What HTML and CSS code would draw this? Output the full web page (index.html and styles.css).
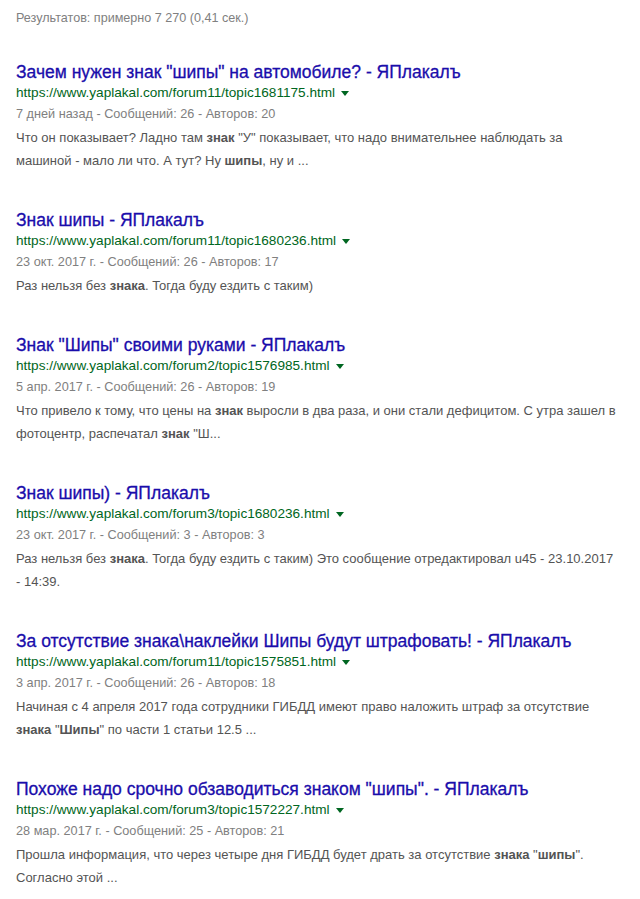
FILE: index.html
```html
<!DOCTYPE html>
<html lang="ru">
<head>
    <meta charset="UTF-8">
    <meta name="viewport" content="width=device-width, initial-scale=1.0">
    <title>знак шипы - Поиск</title>
    <link rel="stylesheet" href="styles.css">
</head>
<body>
    <div class="page">
        <div class="stats">Результатов: примерно 7 270 (0,41 сек.)</div>

        <div class="results">
            <div class="result">
                <a class="title" href="#">Зачем нужен знак "шипы" на автомобиле? - ЯПлакалъ</a>
                <div class="url">https://www.yaplakal.com/forum11/topic1681175.html<span class="arrow"></span></div>
                <div class="meta">7 дней назад - Сообщений: 26 - Авторов: 20</div>
                <div class="snippet">Что он показывает? Ладно там <b>знак</b> "У" показывает, что надо внимательнее наблюдать за<br>машиной - мало ли что. А тут? Ну <b>шипы</b>, ну и ...</div>
            </div>

            <div class="result">
                <a class="title" href="#">Знак шипы - ЯПлакалъ</a>
                <div class="url">https://www.yaplakal.com/forum11/topic1680236.html<span class="arrow"></span></div>
                <div class="meta">23 окт. 2017 г. - Сообщений: 26 - Авторов: 17</div>
                <div class="snippet">Раз нельзя без <b>знака</b>. Тогда буду ездить с таким)</div>
            </div>

            <div class="result">
                <a class="title" href="#">Знак "Шипы" своими руками - ЯПлакалъ</a>
                <div class="url">https://www.yaplakal.com/forum2/topic1576985.html<span class="arrow"></span></div>
                <div class="meta">5 апр. 2017 г. - Сообщений: 26 - Авторов: 19</div>
                <div class="snippet">Что привело к тому, что цены на <b>знак</b> выросли в два раза, и они стали дефицитом. С утра зашел в<br>фотоцентр, распечатал <b>знак</b> "Ш...</div>
            </div>

            <div class="result">
                <a class="title" href="#">Знак шипы) - ЯПлакалъ</a>
                <div class="url">https://www.yaplakal.com/forum3/topic1680236.html<span class="arrow"></span></div>
                <div class="meta">23 окт. 2017 г. - Сообщений: 3 - Авторов: 3</div>
                <div class="snippet">Раз нельзя без <b>знака</b>. Тогда буду ездить с таким) Это сообщение отредактировал u45 - 23.10.2017<br>- 14:39.</div>
            </div>

            <div class="result">
                <a class="title" href="#">За отсутствие знака\наклейки Шипы будут штрафовать! - ЯПлакалъ</a>
                <div class="url">https://www.yaplakal.com/forum11/topic1575851.html<span class="arrow"></span></div>
                <div class="meta">3 апр. 2017 г. - Сообщений: 26 - Авторов: 18</div>
                <div class="snippet">Начиная с 4 апреля 2017 года сотрудники ГИБДД имеют право наложить штраф за отсутствие<br><b>знака</b> "<b>Шипы</b>" по части 1 статьи 12.5 ...</div>
            </div>

            <div class="result">
                <a class="title" href="#">Похоже надо срочно обзаводиться знаком "шипы". - ЯПлакалъ</a>
                <div class="url">https://www.yaplakal.com/forum3/topic1572227.html<span class="arrow"></span></div>
                <div class="meta">28 мар. 2017 г. - Сообщений: 25 - Авторов: 21</div>
                <div class="snippet">Прошла информация, что через четыре дня ГИБДД будет драть за отсутствие <b>знака</b> "<b>шипы</b>".<br>Согласно этой ...</div>
            </div>
        </div>
    </div>
</body>
</html>
```

FILE: styles.css
```css
* {
    margin: 0;
    padding: 0;
    box-sizing: border-box;
}
body {
    background: #fff;
    font-family: "Liberation Sans", Arial, sans-serif;
}
.page {
    padding: 8px 0 0 16px;
}
.stats {
    font-size: 12.6px;
    line-height: 20px;
    color: #808080;
}
.results {
    margin-top: 33px;
}
.result {
    margin-bottom: 37px;
}
.title {
    display: block;
    font-size: 17.5px;
    line-height: 22px;
    color: #1a0dab;
    text-decoration: none;
    -webkit-text-stroke: 0.3px #1a0dab;
}
.url {
    font-size: 13.6px;
    line-height: 20px;
    color: #006621;
}
.arrow {
    display: inline-block;
    margin-left: 6px;
    vertical-align: middle;
    border-top: 5px solid #006621;
    border-left: 4px solid transparent;
    border-right: 4px solid transparent;
}
.meta {
    font-size: 12.7px;
    line-height: 23px;
    color: #808080;
}
.snippet {
    font-size: 13px;
    line-height: 23px;
    color: #545454;
}
.snippet b {
    color: #545454;
}
```
